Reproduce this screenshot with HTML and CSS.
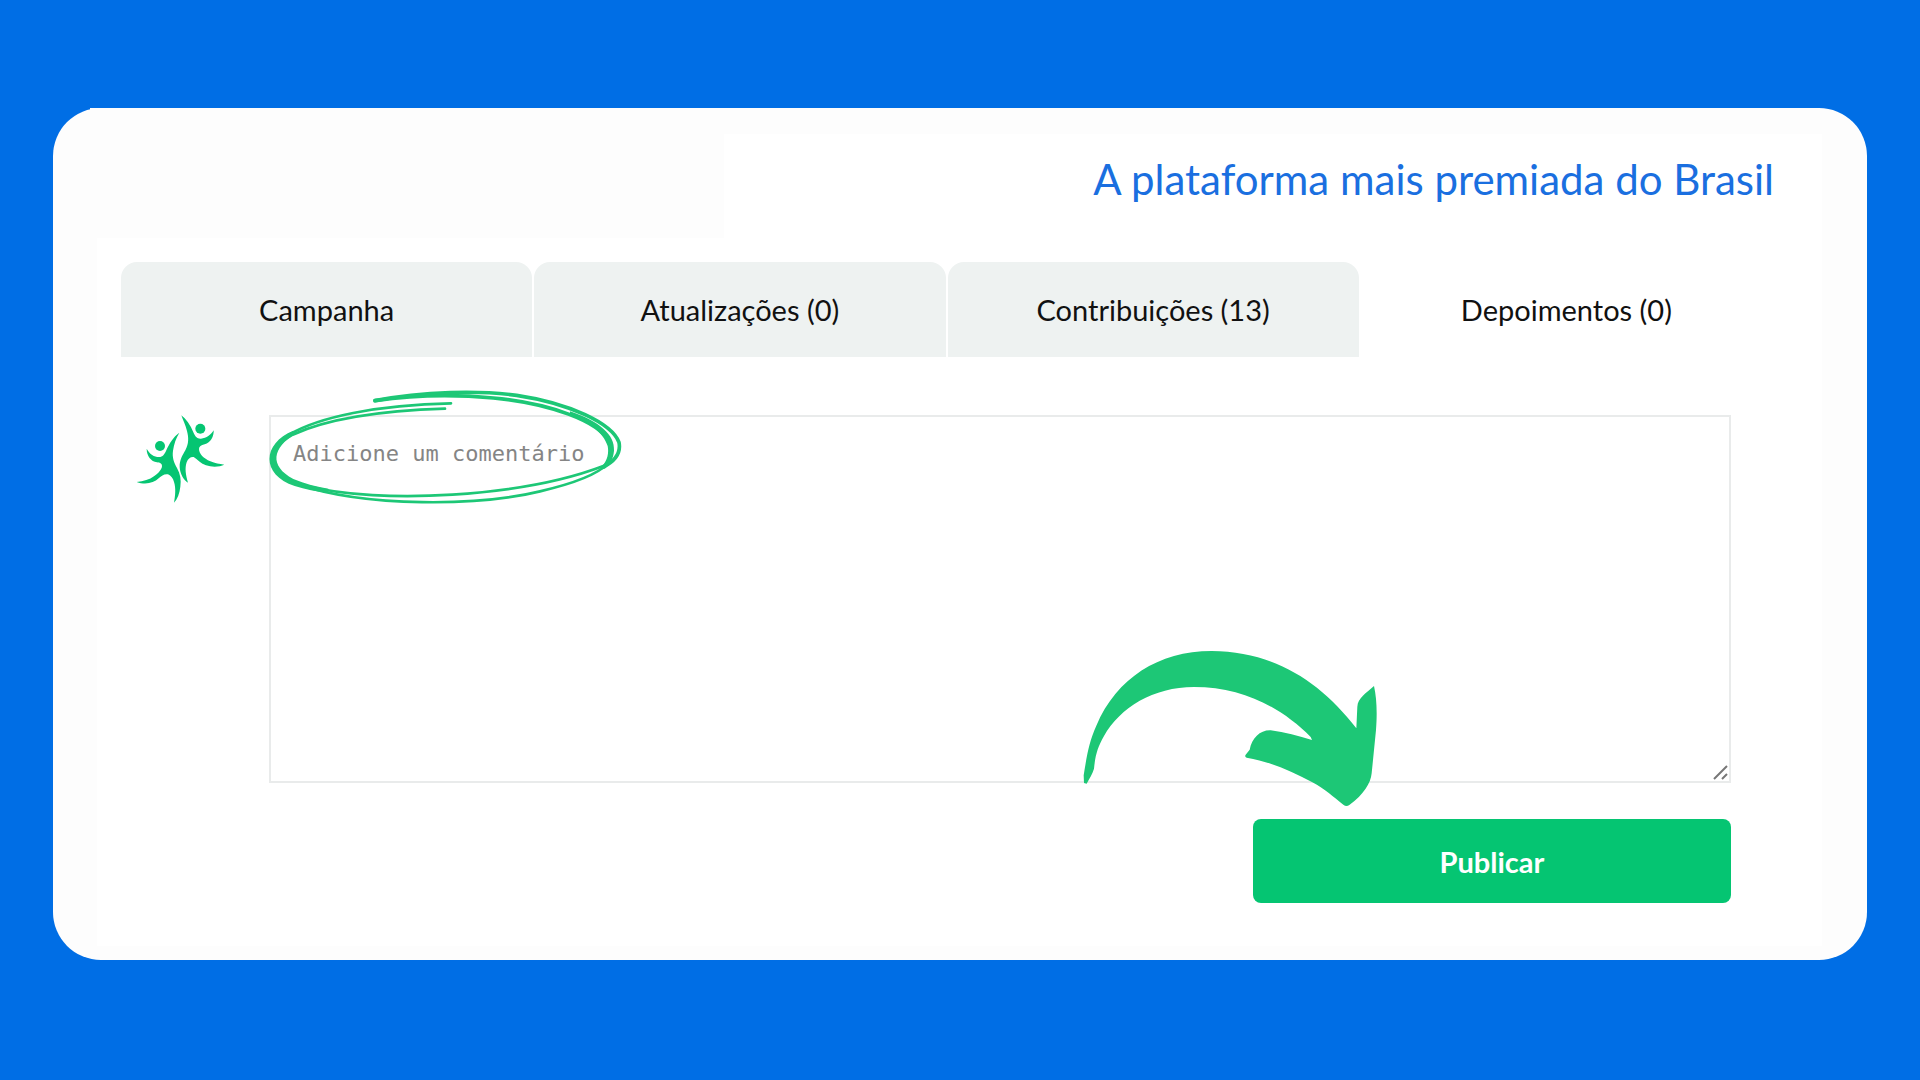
FILE: index.html
```html
<!DOCTYPE html>
<html lang="pt-BR">
<head>
    <meta charset="UTF-8">
    <meta name="viewport" content="width=device-width, initial-scale=1.0">
    <title>Depoimentos</title>
    <link rel="stylesheet" href="styles.css">
</head>
<body>
    <main class="card">
        <header class="header">
            <h1>A plataforma mais premiada do Brasil</h1>
        </header>
        <div class="content">
            <nav class="tabs">
                <a href="#campanha" class="tab">Campanha</a>
                <a href="#atualizacoes" class="tab">Atualizações (0)</a>
                <a href="#contribuicoes" class="tab">Contribuições (13)</a>
                <a href="#depoimentos" class="tab active" aria-current="page">Depoimentos (0)</a>
            </nav>
            <form class="comment-form">
                <svg class="avatar" viewBox="0 0 360 360" aria-hidden="true">
                    <circle cx="241" cy="86" r="15"/>
                    <circle cx="120" cy="138" r="15"/>
                    <path d="M184 46C197 56 212 76 220 97C226 111 232 117 243 116C260 114 272 105 281 91C282 110 272 128 254 133C243 136 237 139 237 147C237 162 251 175 271 184C285 190 298 192 313 194C299 201 276 202 258 196C243 191 232 178 221 171C211 170 204 176 200 187C194 206 197 224 204 248C190 240 180 220 179 201C178 181 188 165 196 151C207 130 206 113 201 93C197 76 189 61 184 46Z"/>
                    <path d="M178 98C168 114 162 132 159 152C156 172 162 188 171 204C181 222 184 240 181 260C179 280 172 297 162 308C166 286 168 264 162 246C159 235 153 227 144 223C133 221 125 227 116 235C101 249 77 256 50 246C71 244 88 239 103 228C117 218 126 207 126 198C126 190 119 188 111 187C93 184 80 168 80 146C90 163 102 171 117 171C129 171 133 163 138 153C148 131 160 110 178 98Z"/>
                </svg>
                <div class="field">
                    <textarea class="comment" aria-label="Comentário" placeholder="Adicione um comentário"></textarea>
                    <svg class="grip" viewBox="0 0 16 16" aria-hidden="true">
                        <path d="M1 14L14 1M9 14L14 9"/>
                    </svg>
                    <svg class="circle-mark" viewBox="0 0 1170 405" aria-hidden="true">
                        <path class="thin" d="M603 70C380 74 205 112 119 163C42 212 45 283 168 317C390 375 820 350 1060 258"/>
                        <path class="thin" d="M585 86C385 92 225 120 128 164C40 214 48 282 140 312C350 384 690 378 870 334C970 311 1040 285 1074 251"/>
                        <path d="M375 62C490 45 620 43 730 54C900 70 1045 123 1079 186C1090 214 1083 238 1063 260"/>
                        <path d="M375 62C520 33 690 31 800 46C960 70 1085 130 1107 187C1113 218 1095 244 1058 262"/>
                        <path class="fill" d="M130 152C36 190 32 284 134 318C165 328 200 335 235 338L235 326C200 320 165 312 130 297C57 258 66 204 138 160Z"/>
                        <path class="fill" d="M960 94C1050 125 1095 165 1092 212C1090 238 1078 254 1060 266L1056 258C1073 243 1077 216 1073 198C1060 156 1015 127 960 102Z"/>
                    </svg>
                    <svg class="arrow" viewBox="0 0 960 540" aria-hidden="true">
                        <path d="M42 429L41 406C50 350 57 305 79 257C140 115 265 33 425 33C610 34 750 123 859 265L862 200C863 174 889 159 912 138C920 175 922 215 918 270L905 400C902 430 882 463 838 495Q829 501 820 494C790 471 765 447 727 427C660 391 600 365 530 353Q523 350 527 344L539 329C546 294 570 270 602 271C645 277 685 288 726 300L722 291C630 199 515 141 372 141C250 141 150 203 102 288C83 321 76 345 72 386C67 403 58 416 50 431Z"/>
                    </svg>
                </div>
                <button type="button" class="btn">Publicar</button>
            </form>
        </div>
    </main>
</body>
</html>
```
FILE: styles.css
```css
* {
    margin: 0;
    padding: 0;
    box-sizing: border-box;
}
body {
    font-family: Lato, sans-serif;
    background: #006ee5;
    color: #111;
    min-height: 100vh;
    padding: 108px 53px 120px;
}
.card {
    position: relative;
    padding: 26px 45px 14px 44px;
    background: #fdfdfd;
    border-radius: 48px;
}
/* square edge at the start of the top side */
.card::before {
    content: "";
    position: absolute;
    top: 0;
    left: 37px;
    width: 16px;
    height: 3px;
    background: #fdfdfd;
}
.header {
    display: grid;
    grid-template-columns: 4fr 7fr;
}
h1 {
    grid-column: 2;
    height: 104px;
    padding-right: 48px;
    background: #fff;
    color: #1a6fe0;
    font-size: 42px;
    font-weight: 400;
    line-height: 90px;
    text-align: right;
    white-space: nowrap;
}
.content {
    padding: 24px 50px 43px 24px;
    background: #fff;
}
.tabs {
    display: grid;
    grid-template-columns: repeat(4, 1fr);
    gap: 2px;
}
.tab {
    padding: 32px 0 31px;
    border-radius: 16px 16px 0 0;
    background: #eef2f1;
    color: #111;
    font-size: 29px;
    line-height: 32px;
    text-align: center;
    text-decoration: none;
}
.tab.active {
    background: none;
}
.comment-form {
    display: grid;
    grid-template-columns: 120px 1fr;
    column-gap: 28px;
    row-gap: 36px;
    padding: 58px 41px 0 0;
}
.avatar {
    width: 120px;
    height: 120px;
    margin-top: -15px;
    margin-left: -1px;
    fill: #05c572;
}
.field {
    position: relative;
}
.comment {
    display: block;
    width: 100%;
    height: 368px;
    padding: 23px 22px;
    border: 2px solid #e9ebeb;
    background: none;
    font-family: "DejaVu Sans Mono", monospace;
    font-size: 22px;
    line-height: 28px;
    resize: none;
}
.comment::placeholder {
    color: #858585;
}
.grip {
    position: absolute;
    right: 2px;
    bottom: 2px;
    width: 16px;
    height: 16px;
    fill: none;
    stroke: #777;
    stroke-width: 2;
}
.circle-mark {
    position: absolute;
    top: -35px;
    left: -19px;
    width: 390px;
    height: 135px;
    fill: none;
    stroke: #1dc776;
    stroke-width: 11;
    stroke-linecap: round;
    pointer-events: none;
}
.circle-mark .thin {
    stroke-width: 8;
}
.circle-mark .fill {
    fill: #1dc776;
    stroke: none;
}
.arrow {
    position: absolute;
    right: 341px;
    bottom: -37px;
    width: 320px;
    height: 180px;
    fill: #1dc776;
    pointer-events: none;
}
.btn {
    grid-column: 2;
    justify-self: end;
    width: 478px;
    padding: 26px 0 25px;
    border: none;
    border-radius: 8px;
    background: #05c572;
    color: white;
    font-family: inherit;
    font-size: 29px;
    font-weight: 700;
    line-height: 33px;
    cursor: pointer;
}
```
